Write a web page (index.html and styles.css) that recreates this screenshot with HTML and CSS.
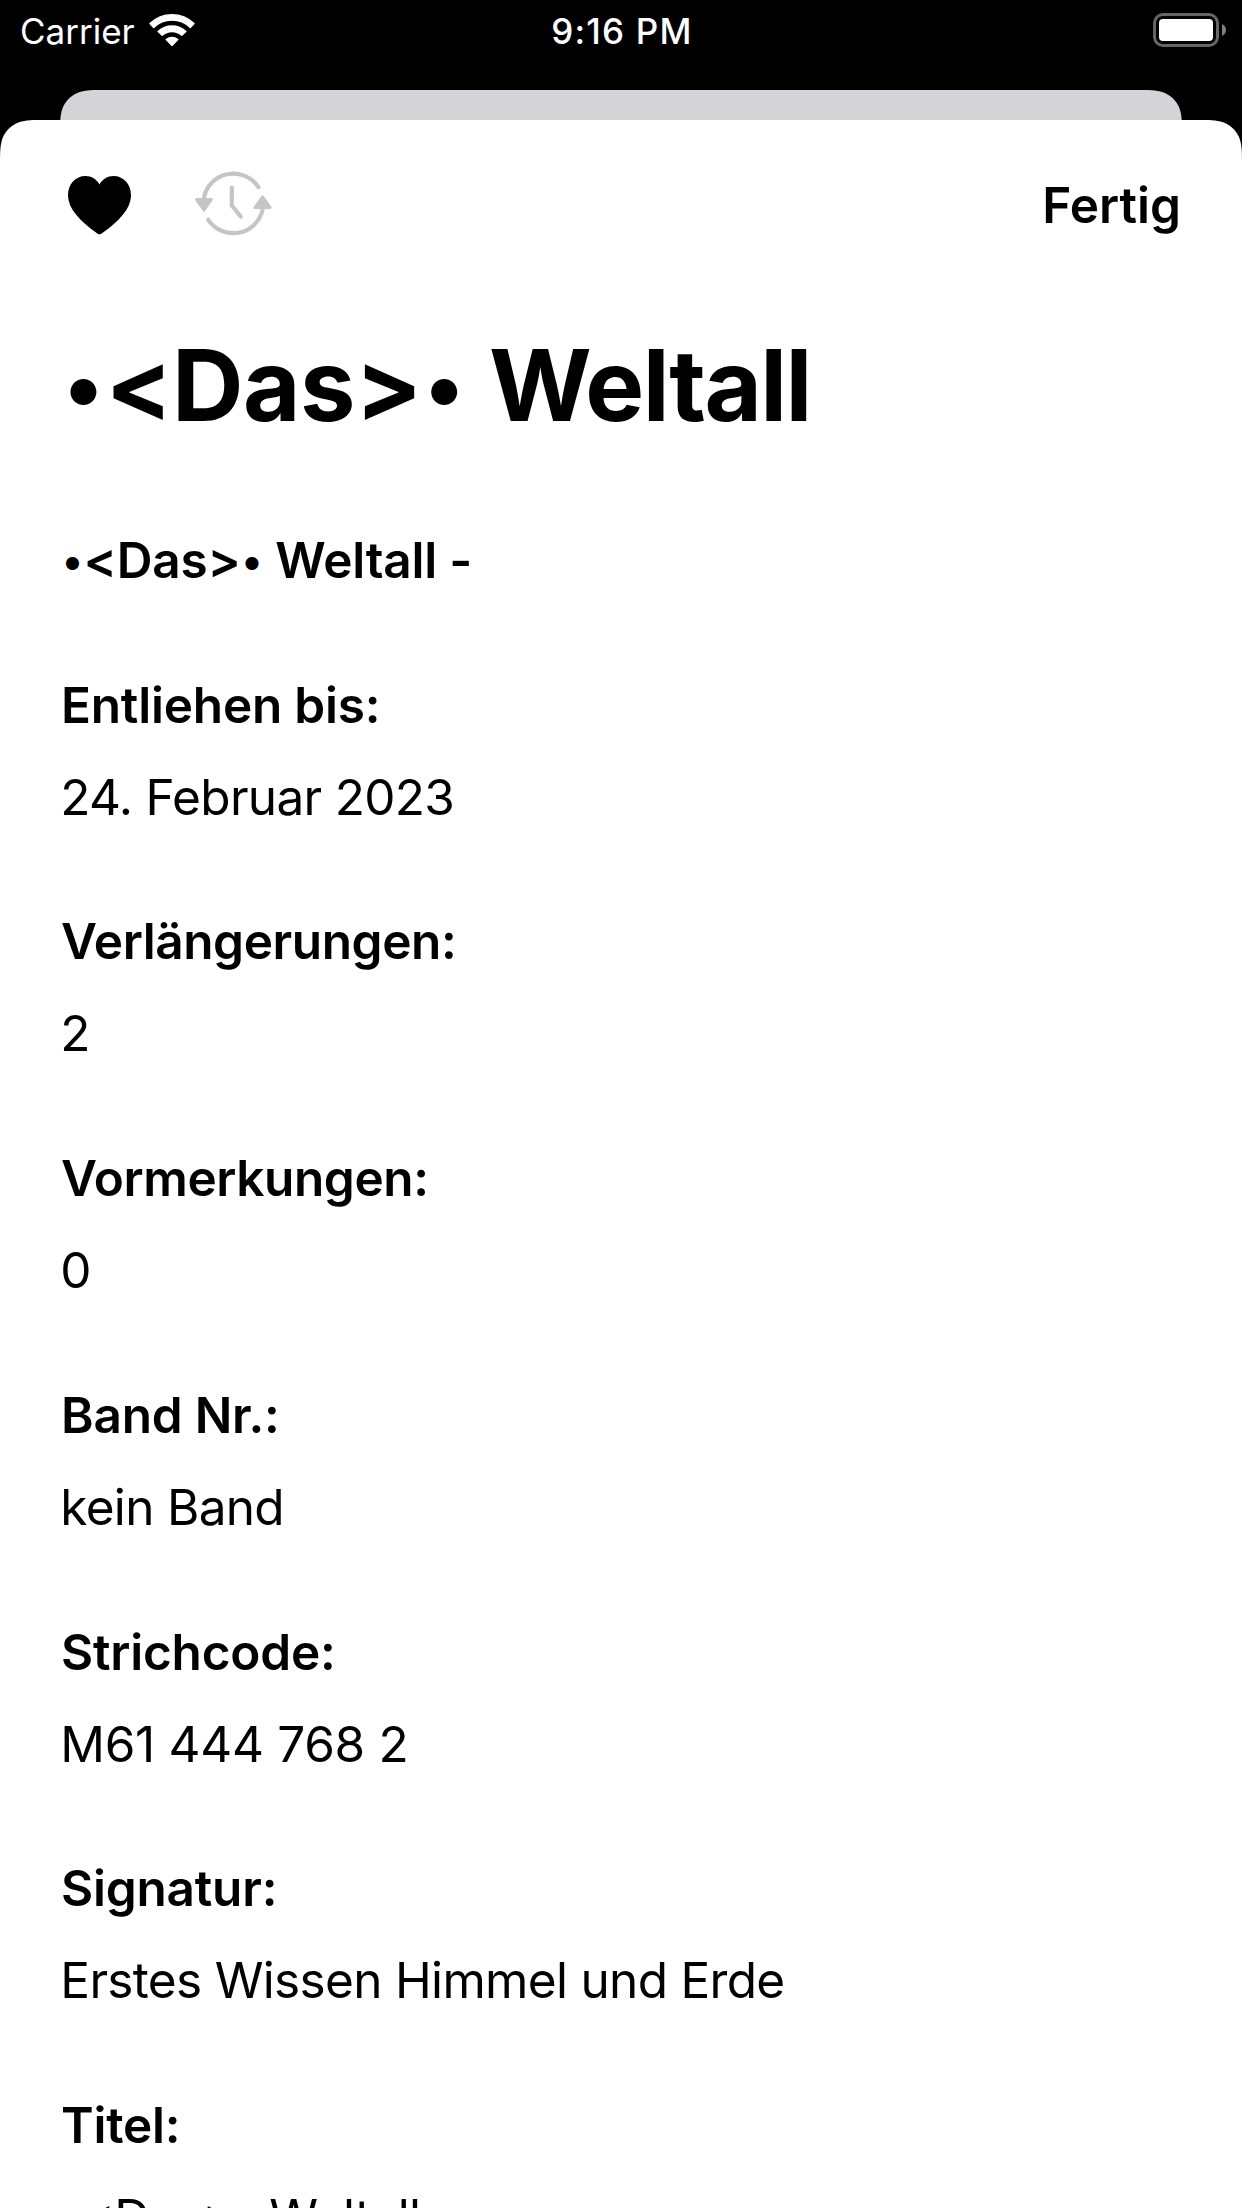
FILE: index.html
```
<!DOCTYPE html>
<html lang="de">
<head>
<meta charset="utf-8">
<title>Das Weltall</title>
<link rel="stylesheet" href="styles.css">
</head>
<body>
<div class="screen">
  <header class="status">
    <div class="status-left">
      <span class="carrier">Carrier</span>
      <svg class="wifi" width="46" height="34" viewBox="0 0 46 34" fill="#fff" stroke="#fff" stroke-width="1.4" stroke-linejoin="round">
        <path d="M1 10.6A31.5 31.5 0 0 1 45 10.6L41.3 14.4A26.2 26.2 0 0 0 4.7 14.4Z"/>
        <path d="M9.1 18.4A20.4 20.4 0 0 1 36.9 18.4L32.8 22.3A14.4 14.4 0 0 0 13.2 22.3Z"/>
        <path d="M17.2 26.6A9 9 0 0 1 28.8 26.6L23 32.4Z"/>
      </svg>
    </div>
    <span class="time">9:16 PM</span>
    <div class="status-right">
      <svg width="74" height="34" viewBox="0 0 74 34">
        <rect x="1.5" y="1.5" width="63" height="31" rx="8.5" fill="none" stroke="#666" stroke-width="3"/>
        <rect x="6" y="6" width="54" height="22" rx="4" fill="#fff"/>
        <path d="M69 11C74.300 13.500 74.300 20.500 69 23Z" fill="#808080"/>
      </svg>
    </div>
  </header>
  <div class="backdrop"></div>
  <main class="sheet">
    <nav class="nav">
      <div class="nav-icons">
        <svg class="heart" width="63" height="59" viewBox="0 0 63 59">
          <path d="M31.500 58.300C30.400 58.300 29.200 57.400 28 56.500C12 45 0 32.500 0 19.500C0 8 7.500 0 17.500 0C23.500 0 28.600 3.200 31.500 8.500C34.400 3.200 39.500 0 45.500 0C55.500 0 63 8 63 19.500C63 32.500 51 45 35 56.500C33.800 57.400 32.600 58.300 31.500 58.300Z"/>
        </svg>
        <svg width="78" height="66" viewBox="194 170 78 66" fill="none" stroke="#c5c5c7" stroke-width="4.200" stroke-linecap="round" stroke-linejoin="round">
          <path d="M203.700 199A30 30 0 0 1 258.500 187.200"/>
          <path d="M262.900 208A30 30 0 0 1 208.300 219.800"/>
          <path d="M231.800 187.500V205.500L240.700 216.500"/>
          <path d="M196.300 199.500H211.500L203.900 210.200Z" fill="#c5c5c7" stroke-width="2.800"/>
          <path d="M254.800 207.600H270.200L262.600 196.800Z" fill="#c5c5c7" stroke-width="2.800"/>
        </svg>
      </div>
      <span class="done">Fertig</span>
    </nav>
    <div class="content">
      <h1 class="title"><span class="dot">•</span>&lt;Das&gt;<span class="dot">•</span> <span class="word">Weltall</span></h1>
      <p class="label subtitle"><span class="dot">•</span>&lt;Das&gt;<span class="dot">•</span> Weltall -</p>
      <section class="field"><h2 class="label">Entliehen bis:</h2><p class="value">24. Februar 2023</p></section>
      <section class="field"><h2 class="label long">Verlängerungen:</h2><p class="value">2</p></section>
      <section class="field"><h2 class="label long">Vormerkungen:</h2><p class="value">0</p></section>
      <section class="field"><h2 class="label">Band Nr.:</h2><p class="value">kein Band</p></section>
      <section class="field"><h2 class="label">Strichcode:</h2><p class="value code">M61 444 768 2</p></section>
      <section class="field"><h2 class="label">Signatur:</h2><p class="value">Erstes Wissen Himmel und Erde</p></section>
      <section class="field"><h2 class="label">Titel:</h2><p class="value"><span class="dot">•</span><span class="bracket">&lt;</span>Das<span class="bracket">&gt;</span><span class="dot">•</span> Weltall</p></section>
    </div>
  </main>
</div>
</body>
</html>
```
FILE: styles.css
```
* { box-sizing: border-box; margin: 0; padding: 0; }
html, body { background: #000; }
body { font-family: Inter, "Liberation Sans", sans-serif; font-feature-settings: "calt" 0; color: #000; }
svg { display: block; }

.screen {
  width: 1242px;
  height: 2208px;
  overflow: hidden;
  display: flex;
  flex-direction: column;
  background: #000;
}

.status {
  height: 90px;
  flex: none;
  display: grid;
  grid-template-columns: 1fr auto 1fr;
  align-items: start;
  padding: 0 15px 0 20px;
  color: #fff;
  font-size: 35px;
  line-height: 62px;
}
.status-left { display: flex; gap: 14px; }
.wifi { margin-top: 13px; }
.time { font-weight: 500; letter-spacing: 1.200px; margin-right: 3px; }
.status-right { display: flex; justify-content: flex-end; padding-top: 13px; }

/* Both cards use continuous corners: a 30px radius easing out over 46px. */
.backdrop {
  height: 30px;
  flex: none;
  margin: 0 60px;
  background: #d4d3d8;
  clip-path: path("M0 45.860C0 32.650 0 26.050 2.250 18.940C5.070 11.180 11.180 5.070 18.940 2.250C26.050 0 32.650 0 45.860 0H1076.140C1089.350 0 1095.950 0 1103.060 2.250C1110.820 5.070 1116.930 11.180 1119.750 18.940C1122 26.050 1122 32.650 1122 45.860Z");
}

.sheet {
  flex: 1;
  min-height: 0;
  overflow: hidden;
  background: #fff;
  clip-path: path("M0 45.860C0 32.650 0 26.050 2.250 18.940C5.070 11.180 11.180 5.070 18.940 2.250C26.050 0 32.650 0 45.860 0H1196.140C1209.350 0 1215.950 0 1223.060 2.250C1230.820 5.070 1236.930 11.180 1239.750 18.940C1242 26.050 1242 32.650 1242 45.860V2088H0Z");
}
.nav {
  height: 170px;
  padding: 0 61px 0 68px;
  display: flex;
  align-items: center;
  justify-content: space-between;
}
.nav-icons { display: flex; gap: 63px; align-items: flex-start; padding-bottom: 4px; }
.heart { margin-top: 6px; }
.done { font-size: 49.500px; font-weight: 600; line-height: 60px; }

.content {
  padding: 35.400px 61px 0;
  display: flex;
  flex-direction: column;
  gap: 84.700px;
  font-size: 49.500px;
  line-height: 60px;
  white-space: nowrap;
}
.title { font-size: 99px; line-height: 120px; font-weight: 700; letter-spacing: -0.500px; }
.word { letter-spacing: -1.600px; }
.label { font-size: 49.500px; font-weight: 600; letter-spacing: -0.200px; }
.label.long { letter-spacing: -0.400px; }
.field { display: flex; flex-direction: column; gap: 32px; }
.value { margin-left: -0.700px; font-weight: 400; letter-spacing: -0.680px; }
.value.code { letter-spacing: -0.300px; }
.dot { margin: 0 0.033em; font-size: 0.840em; line-height: 0; vertical-align: 0.060em; }
.subtitle .dot { margin: 0 0.022em; }
.value .dot { margin: 0 -0.010em; }
.bracket { line-height: 0; vertical-align: 2px; }
```
